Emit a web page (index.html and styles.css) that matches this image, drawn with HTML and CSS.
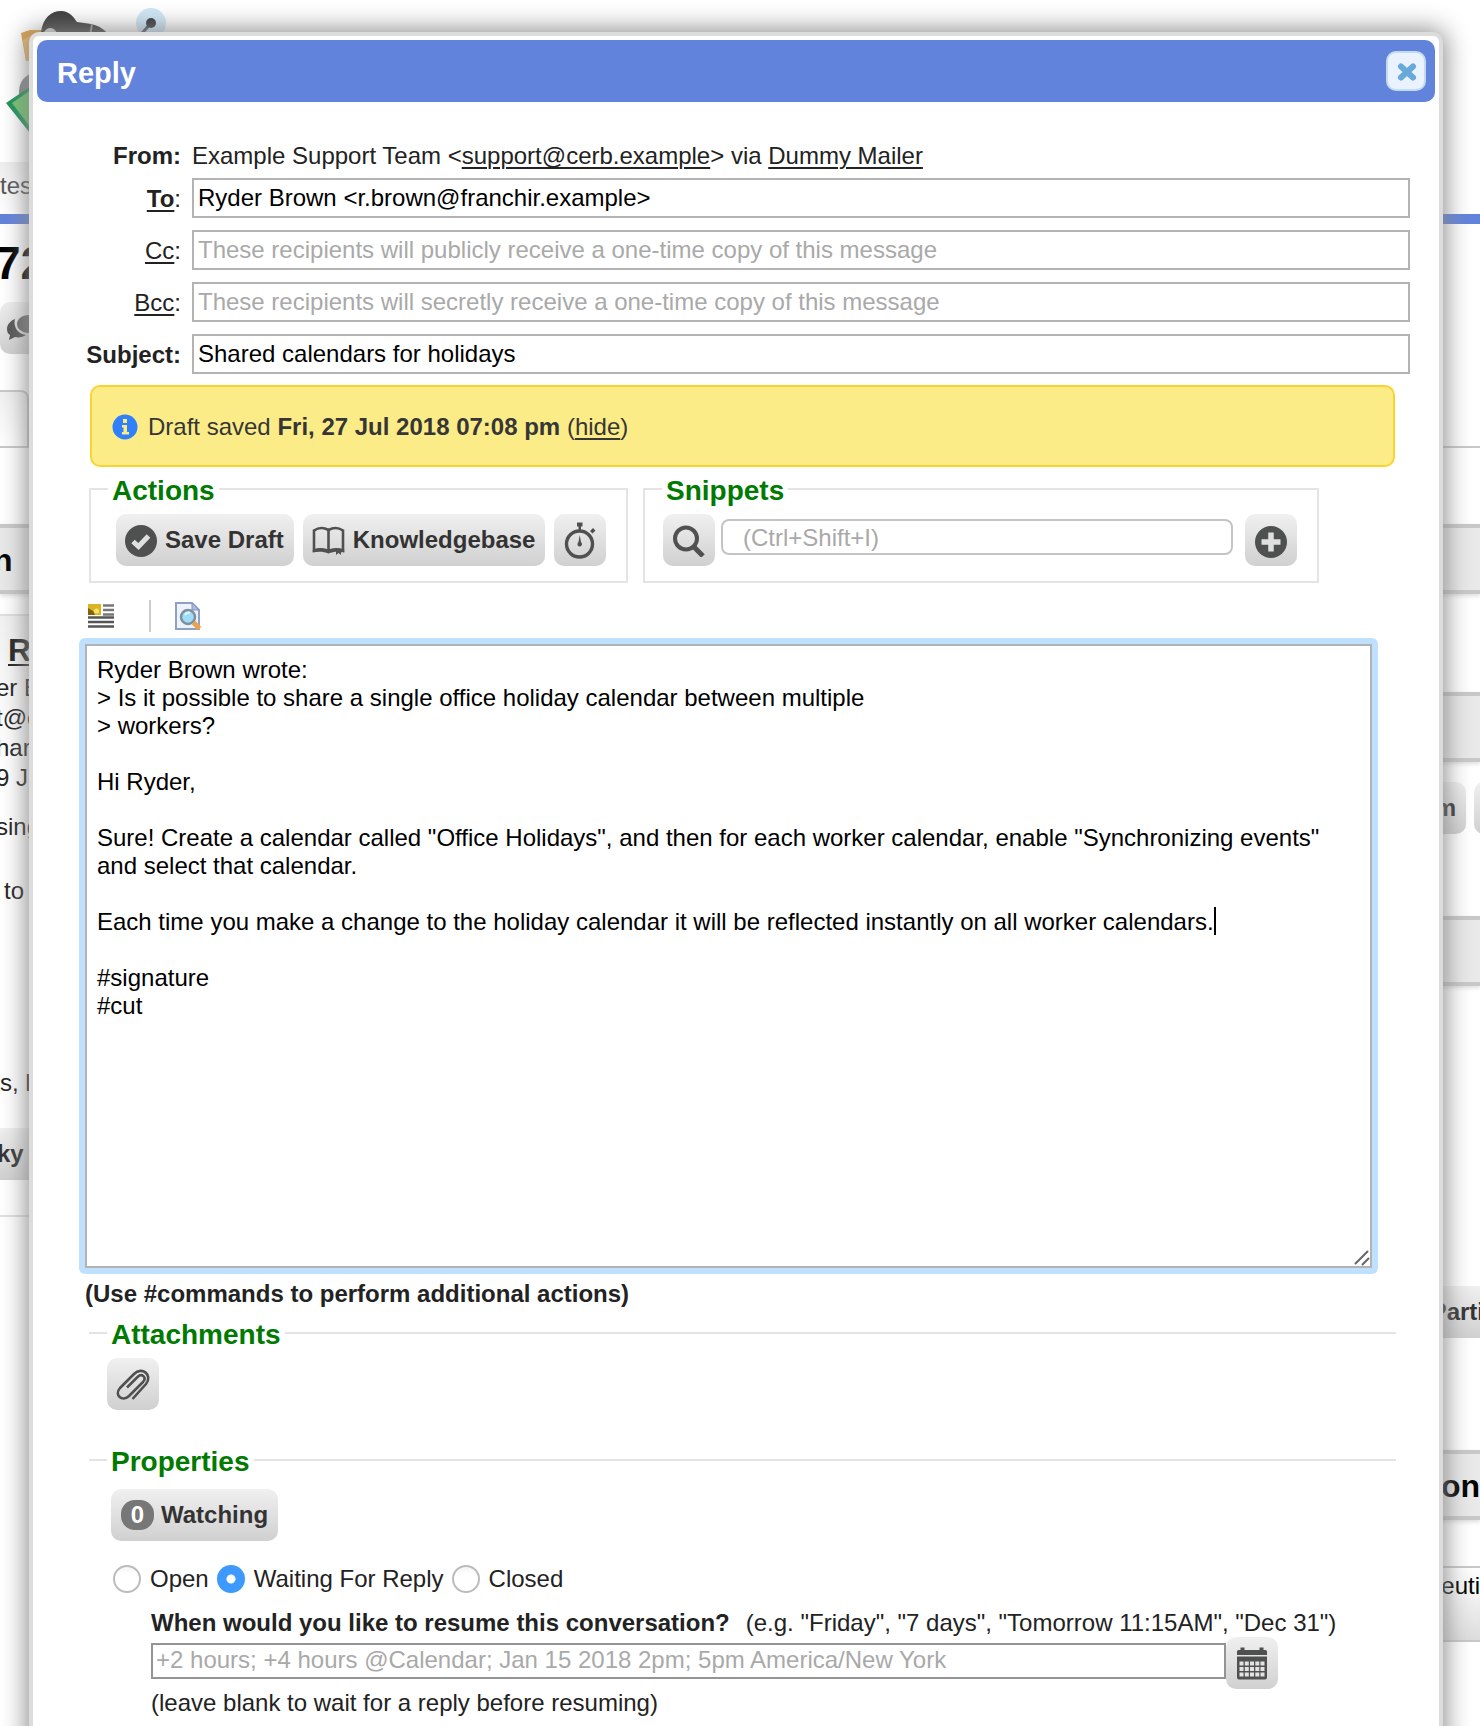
FILE: index.html
```html
<!DOCTYPE html>
<html lang="en">
<head>
<meta charset="utf-8">
<meta name="viewport" content="width=device-width, initial-scale=1">
<title>Reply</title>
<link rel="stylesheet" href="styles.css">
</head>
<body>
<div class="screen">
  <div class="page">
    <div class="masthead">
      <svg class="logo" viewBox="0 0 170 140" aria-hidden="true">
        <path d="M21 33l9-3 26 0-2 30-28 1z" fill="#e0a045"/>
        <path d="M23 40l9-5 0 26-6 0z" fill="#eab765"/>
        <ellipse cx="33" cy="92" rx="14" ry="18" fill="#85878a"/>
        <path d="M41 32c2-14 10-21 20-21 9 0 13 7 16 11l14 2c8 2 14 5 18 12H41z" fill="#3c3c3c"/>
        <path d="M44 32c5-7 12-4 14 4H44z" fill="#dcdcdc"/>
        <path d="M92 24l-2 12" stroke="#999" stroke-width="2"/>
        <path d="M6 103l28-19v54z" fill="#1d9257"/>
        <path d="M12 103l22-15v44z" fill="#71c36d"/>
        <circle cx="151" cy="23" r="15" fill="#cfe7f7"/>
        <path d="M151 23l-13 15" stroke="#4c5259" stroke-width="3"/>
        <circle cx="151" cy="23" r="5" fill="#33373b"/>
      </svg>
      <span class="nav-tab">tes</span>
    </div>
    <div class="columns">
      <div class="col-left">
        <h1 class="ticket-title">72</h1>
        <button class="btn chat-btn" type="button" aria-label="Comments">
          <svg width="34" height="26" viewBox="0 0 34 26" aria-hidden="true"><path d="M9 4c-5 2-8 6-8 10 0 3 1 5 3 6l-1 5 6-3c4 1 8 0 11-2C12 19 7 12 9 4z" fill="#555"/><ellipse cx="22" cy="9" rx="11" ry="9" fill="#6d6d6d"/></svg>
        </button>
        <div class="tab-box"></div>
        <h2 class="bar bar-first">n</h2>
        <div class="message">
          <a class="sender" href="#">R</a>
          <span class="meta">er B</span>
          <span class="meta">t@c</span>
          <span class="meta">har</span>
          <span class="meta">9 J</span>
          <p class="para">sing</p>
          <p class="para para-to">to</p>
          <p class="para para-sign">s, l</p>
          <button class="btn sticky-btn" type="button">ky</button>
        </div>
      </div>
      <div class="col-right">
        <div class="tab-line"></div>
        <div class="bar bar-first"></div>
        <div class="bar bar-second"></div>
        <div class="side-buttons"><button class="btn" type="button">m</button><button class="btn" type="button" aria-label="More"></button></div>
        <div class="bar bar-third"></div>
        <button class="btn part-btn" type="button">Parti</button>
        <h2 class="bar bar-on">on</h2>
        <div class="exec">euti</div>
      </div>
    </div>
  </div>

  <section class="dialog" role="dialog" aria-labelledby="dialog-title">
    <header class="titlebar">
      <h2 id="dialog-title">Reply</h2>
      <button class="close" type="button" aria-label="Close">
        <svg width="20" height="20" viewBox="0 0 20 20" aria-hidden="true"><path d="M4 4.500l12 11M16 4.500l-12 11" stroke="#68a9d8" stroke-width="6" stroke-linecap="round"/></svg>
      </button>
    </header>
    <form class="reply">
      <div class="fields">
        <span class="lab strong">From:</span>
        <div class="from">Example Support Team &lt;<a href="#">support@cerb.example</a>&gt; via <a href="#">Dummy Mailer</a></div>
        <label class="lab" for="to"><a class="strong" href="#">To</a>:</label>
        <input id="to" type="text" value="Ryder Brown &lt;r.brown@franchir.example&gt;">
        <label class="lab" for="cc"><a href="#">Cc</a>:</label>
        <input id="cc" type="text" placeholder="These recipients will publicly receive a one-time copy of this message">
        <label class="lab" for="bcc"><a href="#">Bcc</a>:</label>
        <input id="bcc" type="text" placeholder="These recipients will secretly receive a one-time copy of this message">
        <label class="lab strong" for="subject">Subject:</label>
        <input id="subject" type="text" value="Shared calendars for holidays">
      </div>

      <div class="notice">
        <svg width="26" height="26" viewBox="0 0 26 26" aria-hidden="true"><circle cx="13" cy="13" r="12.500" fill="#2f80fa"/><path d="M11 5h4v4h-4zM10 11h5v7h2v2.500h-7V18h1.500v-4.500H10z" fill="#fbec88"/></svg>
        <span>Draft saved <b>Fri, 27 Jul 2018 07:08 pm</b> (<a href="#">hide</a>)</span>
      </div>

      <div class="groups">
        <fieldset class="group actions">
          <legend>Actions</legend>
          <div class="row">
            <button class="btn" type="button">
              <svg width="32" height="34" viewBox="0 0 32 34" aria-hidden="true"><circle cx="16" cy="18" r="16" fill="#4f5150"/><path d="M8 18.500l5.500 5 10-10.500" fill="none" stroke="#e0e0e0" stroke-width="5"/></svg>
              Save Draft
            </button>
            <button class="btn" type="button">
              <svg width="33" height="30" viewBox="0 0 33 30" aria-hidden="true"><path d="M2 5.500c4.500-3 10-3 14.500-.5 4.500-2.500 10-2.500 14.500.5M2 4.500V25.500c5-1.500 10-1.500 14.500.5 4.500-2 9.500-2 14.500-.5V4.500M16.500 5V25" fill="none" stroke="#4f5150" stroke-width="2.600"/><path d="M.8 24.500c6-1.500 11-1.200 15.700.7 4.700-1.900 9.700-2.200 15.700-.7v3c-6-1.200-10.700-1-15.700 1-5-2-9.700-2.200-15.700-1zM24 26h5v4l-2.500-2-2.500 2z" fill="#4f5150"/></svg>
              Knowledgebase
            </button>
            <button class="btn icon-btn" type="button" aria-label="Timer">
              <svg width="32" height="40" viewBox="0 0 32 40" aria-hidden="true"><circle cx="15.500" cy="24" r="13" fill="none" stroke="#4f5150" stroke-width="3.400"/><path d="M13 2.500h5.500v4H13zM14.500 6h2.500v4h-2.500zM15.700 15l1.300 7c2 2 .8 4.500-1.300 4.500S12.500 24 14.500 22zM26 11l3-3 2.500 2.500-3 3z" fill="#4f5150"/></svg>
            </button>
          </div>
        </fieldset>
        <fieldset class="group snippets">
          <legend>Snippets</legend>
          <div class="row">
            <button class="btn icon-btn" type="button" aria-label="Search snippets">
              <svg width="32" height="34" viewBox="0 0 32 34" aria-hidden="true"><circle cx="13" cy="15.500" r="11" fill="none" stroke="#4f5150" stroke-width="4"/><path d="M20.500 23.500l9.500 9.500" stroke="#4f5150" stroke-width="5"/></svg>
            </button>
            <input class="snippet-input" type="text" aria-label="Snippet" placeholder="(Ctrl+Shift+I)">
            <button class="btn icon-btn" type="button" aria-label="Add snippet">
              <svg width="32" height="36" viewBox="0 0 32 36" aria-hidden="true"><circle cx="16" cy="20" r="16" fill="#4f5150"/><path d="M16 10.500v19M6.500 20h19" stroke="#e0e0e0" stroke-width="5.500"/></svg>
            </button>
          </div>
        </fieldset>
      </div>

      <div class="toolbar">
        <button class="tool" type="button" aria-label="Insert picture">
          <svg width="26" height="24" viewBox="0 0 26 24" aria-hidden="true"><path d="M15 1.500h11M15 6h11M15 10.500h11" stroke="#777" stroke-width="2.500"/><path d="M0 13.500h26M0 18h26M0 22.500h26" stroke="#555" stroke-width="2.500"/><path d="M0 0h13v11H0z" fill="#d9b321"/><path d="M0 11V4l5 3 2 4z" fill="#85600f"/><circle cx="8.500" cy="7" r="2.500" fill="#f8e36c"/></svg>
        </button>
        <span class="divider"></span>
        <button class="tool" type="button" aria-label="Preview">
          <svg width="28" height="30" viewBox="0 0 28 30" aria-hidden="true"><path d="M2 2h16l7 7v19H2z" fill="#edf3fb" stroke="#8fa0c4" stroke-width="2"/><path d="M18 2v7h7z" fill="#a9bde0" stroke="#8093bd"/><circle cx="14" cy="16" r="7" fill="#9edcf8" stroke="#7f8fa3" stroke-width="2.500"/><path d="M11 14c1-2 3-3 5-2" stroke="#e4f7ff" stroke-width="2" fill="none"/><path d="M19.500 21.500l6 6" stroke="#eda249" stroke-width="5"/></svg>
        </button>
      </div>

      <div class="editor">
        <textarea aria-label="Message" spellcheck="false">Ryder Brown wrote:
&gt; Is it possible to share a single office holiday calendar between multiple
&gt; workers?

Hi Ryder,

Sure! Create a calendar called "Office Holidays", and then for each worker calendar, enable "Synchronizing events" and select that calendar.

Each time you make a change to the holiday calendar it will be reflected instantly on all worker calendars.

#signature
#cut</textarea>
        <span class="caret"></span>
        <svg class="grip" width="16" height="16" viewBox="0 0 16 16" aria-hidden="true"><path d="M1.500 13.500l12-12M8.500 14.500l6-6" stroke="#666" stroke-width="2" stroke-linecap="round"/></svg>
      </div>
      <p class="hint">(Use #commands to perform additional actions)</p>

      <fieldset class="section attachments">
        <legend>Attachments</legend>
        <button class="btn icon-btn" type="button" aria-label="Attach a file">
          <svg width="36" height="34" viewBox="0 0 36 34" aria-hidden="true"><path d="M12 20.500L22.500 10c4.500-4.500 9.500.5 5.500 5L14 29c-7 6.500-15-1-9-8L19 7C27-1 38 8 31 17L17.500 32" fill="none" stroke="#4f5150" stroke-width="2.600"/></svg>
        </button>
      </fieldset>

      <fieldset class="section properties">
        <legend>Properties</legend>
        <button class="btn watching" type="button"><span class="count">0</span>Watching</button>
        <div class="status">
          <label><input type="radio" name="status">Open</label>
          <label><input type="radio" name="status" checked>Waiting For Reply</label>
          <label><input type="radio" name="status">Closed</label>
        </div>
        <div class="resume">
          <div class="question"><label class="strong" for="resume">When would you like to resume this conversation?</label><span>(e.g. "Friday", "7 days", "Tomorrow 11:15AM", "Dec 31")</span></div>
          <div class="date-row">
            <input id="resume" type="text" placeholder="+2 hours; +4 hours @Calendar; Jan 15 2018 2pm; 5pm America/New York">
            <button class="btn icon-btn" type="button" aria-label="Pick a date">
              <svg width="32" height="34" viewBox="0 0 32 34" aria-hidden="true"><path d="M1 9V5.500q0-1.500 1.500-1.500H4.500V1.500h4V4h15V1.500h4V4h2q1.500 0 1.500 1.500V9zM1 10.500h30v21q0 2-2 2H3q-2 0-2-2z" fill="#4f5150"/><path d="M3.500 15.500h4v4h-4zM8.800 15.500h4v4h-4zM14 15.500h4v4h-4zM19.300 15.500h4v4h-4zM24.500 15.500h4v4h-4zM3.500 21h4v4h-4zM8.800 21h4v4h-4zM14 21h4v4h-4zM19.300 21h4v4h-4zM24.500 21h4v4h-4zM3.500 26.500h4v4h-4zM8.800 26.500h4v4h-4zM14 26.500h4v4h-4zM19.300 26.500h4v4h-4zM24.500 26.500h4v4h-4z" fill="#e2e2e2"/></svg>
            </button>
          </div>
          <div class="note">(leave blank to wait for a reply before resuming)</div>
        </div>
      </fieldset>
    </form>
  </section>
</div>
</body>
</html>
```
FILE: styles.css
```css
* { box-sizing: border-box; }
body {
  margin: 0;
  background: #fff;
  color: #222;
  font: 24px/28px "Liberation Sans", Arial, sans-serif;
}
h1, h2, p { margin: 0; }
a { color: inherit; text-underline-offset: 3px; text-decoration-thickness: 2px; }
button, input, textarea { font: inherit; margin: 0; }
svg { display: block; flex: none; }
.strong { font-weight: bold; }

.screen {
  display: grid;
  height: 100vh;
  overflow: hidden;
}
.page, .dialog { grid-area: 1 / 1; }

.btn {
  display: inline-flex;
  align-items: center;
  height: 52px;
  padding: 0 10px 0 9px;
  border: 0;
  border-radius: 10px;
  background: linear-gradient(#f0f0f0, #d0d0d0);
  color: #333;
  font-weight: bold;
  white-space: nowrap;
}
.icon-btn { width: 52px; flex: none; justify-content: center; padding: 0; }

/* page behind the dialog */
.page { overflow: hidden; }
.masthead {
  display: flex;
  flex-direction: column;
  align-items: flex-start;
  border-bottom: 10px solid #6283dc;
}
.logo { width: 170px; height: 140px; margin-bottom: 22px; }
.nav-tab {
  height: 52px;
  padding-top: 10px;
  width: 80px;
  background: linear-gradient(#eee, #fff);
  color: #555;
}
.columns { display: flex; justify-content: space-between; }
.col-left { width: 50%; }
.col-right { width: 50%; text-align: right; }
.ticket-title {
  height: 78px;
  padding-top: 13px;
  margin-left: -5px;
  color: #000;
  font-size: 46px;
  line-height: 52px;
}
.chat-btn { width: 60px; padding-left: 6px; }
.tab-box {
  width: 29px;
  height: 58px;
  margin-top: 36px;
  border: 2px solid #c8c8c8;
  border-left: 0;
  border-radius: 0 8px 0 0;
  background: linear-gradient(#f0f0f0, #fff);
}
.bar {
  height: 70px;
  border: solid #c8c8c8;
  border-width: 4px 0;
  background: #e9e9e9;
  box-shadow: 0 2px 4px #ddd;
  color: #000;
  font-size: 32px;
  line-height: 64px;
}
.col-left .bar { margin-top: 76px; text-indent: -7px; }
.message {
  display: flex;
  flex-direction: column;
  align-items: flex-start;
  height: 603px;
  margin-top: 20px;
  border: solid #e0e0e0;
  border-width: 2px 0;
  background: linear-gradient(#f2f2f2, #fff 140px);
}
.sender { margin: 16px 0 5px 8px; font-size: 32px; line-height: 36px; font-weight: bold; }
.meta { line-height: 30px; margin-left: -4px; }
.para { margin: 20px 0 0 -4px; }
.para-to { margin: 36px 0 0 4px; }
.para-sign { margin: 164px 0 0; }
.sticky-btn { width: 60px; margin: 31px 0 0 -3px; padding: 0; border-radius: 0; }
.tab-line { height: 224px; border-bottom: 2px solid #c8c8c8; }
.col-right .bar-first { margin-top: 76px; }
.bar-second { margin-top: 98px; }
.side-buttons { display: flex; justify-content: flex-end; gap: 8px; margin-top: 20px; }
.side-buttons .btn:last-child { width: 30px; margin-right: -24px; }
.bar-third { margin-top: 82px; }
.part-btn { width: 100px; margin: 300px -4px 0 0; padding: 0; border-radius: 0; justify-content: flex-end; }
.bar-on { margin-top: 112px; }
.exec {
  height: 76px;
  margin-top: 46px;
  padding-top: 4px;
  border: solid #c8c8c8;
  border-width: 2px 0;
  background: linear-gradient(#fff, #ddd);
  color: #000;
}

/* dialog */
.dialog {
  z-index: 1;
  align-self: start;
  min-height: 100vh;
  margin: 32px 37px 0 29px;
  padding: 4px;
  border: 4px solid #dcdcdc;
  border-radius: 10px;
  background: #fff;
  box-shadow: 0 0 26px 2px #888;
}
.titlebar {
  display: flex;
  align-items: center;
  justify-content: space-between;
  height: 62px;
  padding: 0 9px 0 20px;
  border-radius: 10px;
  background: #6283dc;
  color: #fff;
}
.titlebar h2 { padding-top: 4px; font-size: 29px; line-height: 36px; }
.close {
  display: grid;
  place-items: center;
  width: 40px;
  height: 40px;
  padding: 2px 0 0 2px;
  border: 2px solid #c2dcee;
  border-radius: 10px;
  background: #e9f2fd;
}
.reply { padding: 36px 25px 40px 48px; }
.fields {
  display: grid;
  grid-template-columns: 96px 1fr;
  gap: 12px 11px;
  align-items: center;
}
.lab { padding-top: 1px; text-align: right; }
.from { padding: 4px 0 0; }
.fields .lab:first-child { padding-top: 4px; }
.fields input, .date-row input {
  width: 100%;
  height: 40px;
  padding: 0 4px;
  border: 2px solid #b3b3b3;
  background: #fff;
  color: #000;
}
.fields .from, .fields .lab:first-child { margin-bottom: -4px; }
::placeholder { color: #a9a9a9; opacity: 1; }

.notice {
  display: flex;
  align-items: center;
  gap: 10px;
  height: 82px;
  margin: 11px 15px 0 5px;
  padding: 2px 20px 0;
  border: 2px solid #fad42e;
  border-radius: 10px;
  background: #fbec88;
  color: #363636;
}
.groups { display: flex; gap: 15px; margin: 6px 0 0 4px; }
fieldset { min-width: 0; margin: 0; border: 2px solid #e4e4e4; }
legend {
  padding: 4px 4px 0;
  color: #007a00;
  font-size: 28px;
  line-height: 28px;
  font-weight: bold;
}
.group { height: 110px; padding: 9px 20px 0 18px; }
.row { display: flex; gap: 9px; }
.actions { width: 539px; padding-left: 25px; }
.actions legend { margin-left: -8px; }
.snippets legend { margin-left: -1px; }
.actions .btn { gap: 8px; }
.snippets { width: 676px; }
.snippets .row { gap: 6px; }
.snippets .btn:last-child { margin-left: 6px; }
.snippet-input {
  flex: 1;
  min-width: 0;
  height: 36px;
  margin-top: 5px;
  padding: 2px 20px 0;
  border: 2px solid #c4c4c4;
  border-radius: 8px;
  color: #000;
}
.toolbar { display: flex; align-items: center; height: 32px; margin: 17px 0 6px 3px; }
.tool { padding: 0; border: 0; background: none; }
.divider { width: 2px; height: 32px; margin: 0 23px 0 35px; background: #ccc; }

/* the padding forms the focus ring round the message box */
.editor {
  position: relative;
  margin: 0 32px 0 -6px;
  padding: 6px;
  border-radius: 6px;
  background: #bfe0ff;
}
.editor textarea {
  display: block;
  width: 100%;
  height: 624px;
  padding: 10px 10px 8px;
  border: 2px solid #b3b3b3;
  border-radius: 0;
  outline: 0;
  background: #fff;
  color: #000;
  resize: none;
}
.editor .caret { position: absolute; top: 269px; left: 1135px; width: 2px; height: 28px; background: #000; }
.editor .grip { position: absolute; right: 8px; bottom: 8px; }
.hint { margin-top: 6px; font-weight: bold; }
.section { margin: 9px 14px 0 4px; padding: 0 18px; border-width: 2px 0 0; }
.attachments { height: 119px; padding-top: 9px; }
.properties { margin-top: 8px; padding-top: 13px; padding-left: 22px; }
.properties legend { margin-left: -4px; }
.watching { padding: 0 10px; gap: 7px; }
.count { width: 33px; border-radius: 14px; background: #777; color: #fff; line-height: 30px; text-align: center; }
.status { display: flex; gap: 8px; margin: 24px 0 0 2px; }
.status label { display: flex; align-items: center; gap: 9px; }
.status input {
  appearance: none;
  width: 28px;
  height: 28px;
  border: 2px solid #bcbcbc;
  border-radius: 50%;
  background: linear-gradient(#f4f4f4, #fff 30%);
}
.status input:checked { border: 0; background: radial-gradient(circle, #fff 4px, #3d99fc 5px); }
.resume { margin: 16px 0 0 40px; }
.question { display: flex; gap: 16px; white-space: nowrap; }
.date-row { display: flex; align-items: flex-start; margin-right: 100px; }
.date-row input { height: 36px; margin-top: 6px; border-color: #949494; padding: 0 3px 2px; }
```
